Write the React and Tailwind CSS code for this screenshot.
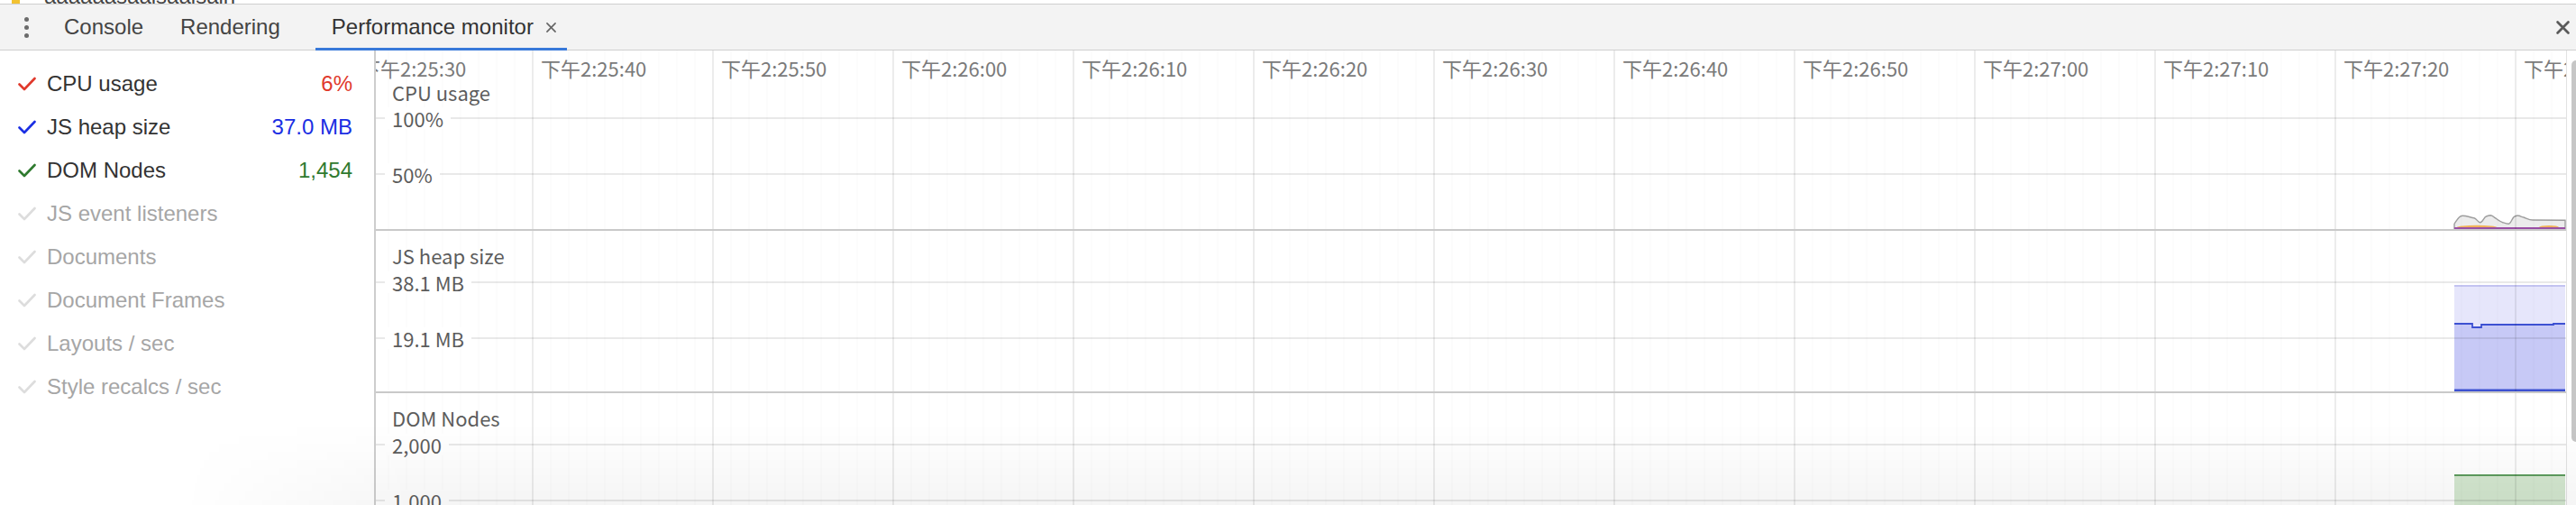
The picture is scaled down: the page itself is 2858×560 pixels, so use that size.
import React from "react";

const CHART_W = 2430;
const TIMES = ["2:25:30", "2:25:40", "2:25:50", "2:26:00", "2:26:10", "2:26:20", "2:26:30", "2:26:40", "2:26:50", "2:27:00", "2:27:10", "2:27:20", "2:27:30"];

const metrics = [
	{ label: "CPU usage", value: "6%", check: "#e0392c", valueClass: "text-[#e0392c]", on: true },
	{ label: "JS heap size", value: "37.0 MB", check: "#1b2fe3", valueClass: "text-[#1b2fe3]", on: true },
	{ label: "DOM Nodes", value: "1,454", check: "#2f7a2f", valueClass: "text-[#2f7a2f]", on: true },
	{ label: "JS event listeners" },
	{ label: "Documents" },
	{ label: "Document Frames" },
	{ label: "Layouts / sec" },
	{ label: "Style recalcs / sec" },
];

const Check = ({ color }) => (
	<svg width="20" height="16" viewBox="0 0 20 16" className="shrink-0">
		<polyline points="1.5,8.5 7,14 18.5,2" fill="none" stroke={color} strokeWidth="2.6" strokeLinecap="round" strokeLinejoin="round" />
	</svg>
);

const Cross = ({ size, stroke, color }) => (
	<svg width={size} height={size} viewBox="0 0 20 20" className="shrink-0">
		<path d="M3 3 L17 17 M17 3 L3 17" stroke={color} strokeWidth={stroke} strokeLinecap="round" />
	</svg>
);

// vertical + horizontal grid of the canvas, drawn over the data like devtools does
const Grid = ({ height, lines }) => {
	const xs = [];
	for (let x = 14; x < CHART_W; x += 20) xs.push(x);
	return (
		<>
			{xs.map((x) => {
				const major = (x - 174) % 200 === 0;
				return (
					<line
						key={x}
						x1={x}
						x2={x}
						y1={0}
						y2={height}
						stroke={major ? "rgba(0,0,0,0.075)" : "rgba(0,0,0,0.02)"}
						strokeWidth={major ? 2 : 1.5}
					/>
				);
			})}
			{lines.map((y) => (
				<line key={y} x1={0} x2={CHART_W} y1={y} y2={y} stroke="rgba(0,0,0,0.085)" strokeWidth="2" />
			))}
		</>
	);
};

const TopSliver = () => (
	<div className="flex h-[4px] items-end overflow-hidden bg-white">
		<div className="flex shrink-0 items-end gap-[27px] pl-[13px]">
			<span className="h-[14px] w-[9px] bg-[#f2c230]" />
			<span className="text-[24px] leading-[17px] text-[#444]">aaaaaasaalsaalsain</span>
		</div>
	</div>
);

const Toolbar = () => (
	<div className="flex h-[52px] items-stretch border-y border-[#cfcfcf] bg-[#f3f3f3] text-[24px] leading-none">
		<div className="flex w-[58px] shrink-0 flex-col items-center justify-center gap-[4px]">
			<span className="h-[5px] w-[5px] rounded-full bg-[#6b6b6b]" />
			<span className="h-[5px] w-[5px] rounded-full bg-[#6b6b6b]" />
			<span className="h-[5px] w-[5px] rounded-full bg-[#6b6b6b]" />
		</div>
		<div className="flex items-center pl-[13px] pr-[20px] text-[#444]">Console</div>
		<div className="flex items-center pl-[21px] pr-[39px] text-[#444]">Rendering</div>
		<div className="relative flex items-center pl-[18px] pr-[11px] text-[#333]">
			<span>Performance monitor</span>
			<span className="ml-[13px]">
				<Cross size={13} stroke={2.6} color="#666" />
			</span>
			<span className="absolute -bottom-[1px] left-0 right-0 h-[3px] bg-[#3879d9]" />
		</div>
		<div className="ml-auto mr-[6px] flex items-center">
			<Cross size={17} stroke={3.2} color="#5a5a5a" />
		</div>
	</div>
);

const Sidebar = () => (
	<div className="w-[417px] shrink-0 border-r-2 border-[#cdcdcd] pt-[13px]">
		{metrics.map((m) => (
			<div key={m.label} className="flex h-[48px] items-center pl-[20px] pr-[24px] text-[24px] leading-none">
				<Check color={m.on ? m.check : "#dddddd"} />
				<span className={m.on ? "ml-[12px] text-[#333]" : "ml-[12px] text-[#a6a6a6]"}>{m.label}</span>
				{m.value && <span className={`ml-auto ${m.valueClass}`}>{m.value}</span>}
			</div>
		))}
	</div>
);

const AxisLabel = ({ top, children }) => (
	<span className={`absolute left-[10px] bg-white px-[8px] leading-[24px] ${top}`}>{children}</span>
);

const CpuPanel = () => (
	<div className="relative h-[200px] shrink-0 border-b-2 border-[#c9c9c9]">
		<svg width={CHART_W} height="198" className="absolute left-0 top-0">
			<path
				d="M2306 192.3 C2309 188 2311 183.5 2314.7 183.3 C2318 183 2324 185 2328 185.7 C2331 186.5 2332 190.7 2334.7 190.7 C2337.5 190.7 2339 184.5 2341.3 184 C2344 183 2345 182.7 2346.3 182.7 C2349 183 2350 185 2351.3 185.7 C2354 187.5 2357 190 2359.7 190.7 C2362 191.5 2364 192.3 2366.3 192.3 C2369 192 2370.5 184.5 2373 184 C2374.5 183.5 2375 183 2376.3 183 C2379 183 2380 185 2383 185 C2386 186 2389 188 2393 188 L2429 188.3 L2429 198 L2306 198 Z"
				fill="#ececec"
				stroke="#9d9d9d"
				strokeWidth="1.4"
			/>
			<ellipse cx="2331" cy="196" rx="22" ry="2.2" fill="#f0b25a" />
			<ellipse cx="2411" cy="196" rx="11" ry="2" fill="#f0b25a" />
			<line x1="2306" x2="2429" y1="197" y2="197" stroke="#9a4fa5" strokeWidth="2" />
			<Grid height={198} lines={[75, 137]} />
		</svg>
		{TIMES.map((t, i) => (
			<span
				key={t}
				className="absolute top-[7px] whitespace-nowrap text-[22px] leading-[24px] text-[#7a7a7a]"
				style={{ left: -17 + i * 200 }}
			>
				下午{t}
			</span>
		))}
		<span className="absolute left-[18px] top-[34px] leading-[24px]">CPU usage</span>
		<AxisLabel top="top-[63px]">100%</AxisLabel>
		<AxisLabel top="top-[125px]">50%</AxisLabel>
	</div>
);

const HeapPanel = () => (
	<div className="relative h-[180px] shrink-0 border-b-2 border-[#c9c9c9]">
		<svg width={CHART_W} height="178" className="absolute left-0 top-0">
			<rect x="2306" y="61" width="123" height="117" fill="#e6e6fb" />
			<line x1="2306" x2="2429" y1="61" y2="61" stroke="#c3c3f1" strokeWidth="2" />
			<path d="M2306 103 H2326 V107 H2336 V104 H2416 V103 H2429 V178 H2306 Z" fill="#c7c9f6" />
			<path d="M2306 103 H2326 V107 H2336 V104 H2416 V103 H2429" fill="none" stroke="#3d51d2" strokeWidth="1.8" />
			<line x1="2306" x2="2429" y1="177" y2="177" stroke="#3d51d2" strokeWidth="3" />
			<Grid height={178} lines={[57, 119]} />
		</svg>
		<span className="absolute left-[18px] top-[15px] leading-[24px]">JS heap size</span>
		<AxisLabel top="top-[45px]">38.1 MB</AxisLabel>
		<AxisLabel top="top-[107px]">19.1 MB</AxisLabel>
	</div>
);

const DomPanel = () => (
	<div className="relative h-[180px] shrink-0 border-b-2 border-[#c9c9c9]">
		<svg width={CHART_W} height="178" className="absolute left-0 top-0">
			<rect x="2306" y="91" width="123" height="87" fill="#d3e7cf" />
			<line x1="2306" x2="2429" y1="91" y2="91" stroke="#5e9c5e" strokeWidth="2" />
			<Grid height={178} lines={[57, 119]} />
		</svg>
		<span className="absolute left-[18px] top-[15px] leading-[24px]">DOM Nodes</span>
		<AxisLabel top="top-[45px]">2,000</AxisLabel>
		<AxisLabel top="top-[107px]">1,000</AxisLabel>
	</div>
);

const Charts = () => (
	<div className="flex w-[2430px] shrink-0 flex-col overflow-hidden font-['Noto_Sans_CJK_SC',sans-serif] text-[22px] text-[#5c5c5c]">
		<CpuPanel />
		<HeapPanel />
		<DomPanel />
	</div>
);

const Scrollbar = () => (
	<div className="flex-1 border-l border-[#e2e2e2] pt-[11px]">
		<div className="ml-[5px] h-[423px] w-[10px] rounded-full bg-[#c6c6c6]" />
	</div>
);

export default function App() {
	return (
		<div className="relative h-[560px] w-[2858px] overflow-hidden bg-white font-['Liberation_Sans',Arial,sans-serif]">
			<TopSliver />
			<Toolbar />
			<div className="flex h-[504px]">
				<Sidebar />
				<Charts />
				<Scrollbar />
			</div>
			{/* soft shadow fading in at the bottom edge */}
			<div className="pointer-events-none absolute bottom-0 left-[200px] right-0 h-[90px] bg-linear-to-b from-transparent to-black/[0.04] [mask-image:linear-gradient(to_right,transparent,black_260px)]" />
		</div>
	);
}
